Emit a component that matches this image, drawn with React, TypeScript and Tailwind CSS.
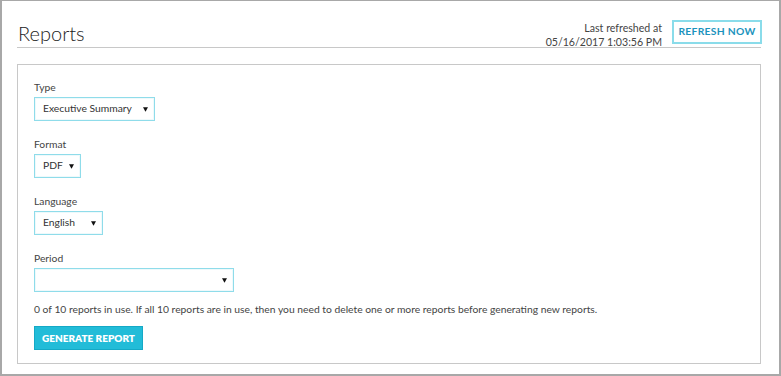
import React from "react";

function Arrow() {
  return (
    <svg width="5" height="5" viewBox="0 0 5 5" className="shrink-0">
      <path d="M0 0.3 H5 L2.5 4.8 Z" fill="#111" />
    </svg>
  );
}

function Select({ value, width }: { value: string; width: string }) {
  return (
    <div
      className={`${width} h-[24px] border border-[#8fdcea] bg-white flex items-center justify-between pl-[8px] pr-[6px] shadow-[inset_0_0_0_1px_#eef9fb] text-[10.3px] text-[#333]`}
    >
      <span>{value}</span>
      <Arrow />
    </div>
  );
}

function Field({ label, value, width }: { label: string; value: string; width: string }) {
  return (
    <div className="flex flex-col">
      <div className="text-[10.3px] leading-[14px] text-[#444] mb-[3px]">{label}</div>
      <Select value={value} width={width} />
    </div>
  );
}

export default function App() {
  return (
    <div
      className="w-[781px] h-[376px] border-2 border-t border-[#a8a8a8] bg-white pl-[15px] pr-[18px]"
      style={{ fontFamily: "Lato, 'Open Sans', sans-serif" }}
    >
      <div className="h-[47px] flex items-end justify-between border-b border-[#c8c8c8]">
        <div className="text-[20px] font-light text-[#222] leading-[24px] pb-[2px] pl-[1px]">Reports</div>
        <div className="flex items-end gap-[10px] pb-[3px]">
          <div className="text-right text-[10.6px] leading-[14px] text-[#444] mb-[-5px]">
            <div>Last refreshed at</div>
            <div>05/16/2017 1:03:56 PM</div>
          </div>
          <div className="w-[90px] h-[24px] border-2 border-[#8adcea] flex items-center justify-center text-[10.3px] font-bold text-[#1b93bd] tracking-[0.3px] mr-[-1px]">
            REFRESH NOW
          </div>
        </div>
      </div>
      <div className="mt-[16px] border border-[#c8c8c8] h-[300px] pl-[16px] pt-[15px] flex flex-col gap-[16px]">
        <Field label="Type" value="Executive Summary" width="w-[121px]" />
        <Field label="Format" value="PDF" width="w-[47px]" />
        <Field label="Language" value="English" width="w-[69px]" />
        <div className="flex flex-col">
          <div className="text-[10.3px] leading-[14px] text-[#444] mb-[3px]">Period</div>
          <Select value="" width="w-[200px]" />
          <div className="text-[10.3px] leading-[14px] text-[#444] mt-[10px]">
            0 of 10 reports in use. If all 10 reports are in use, then you need to delete one or more reports before generating new reports.
          </div>
          <div className="mt-[10px] w-[109px] h-[24px] bg-[#22bcd8] border border-[#15a9c6] flex items-center justify-center text-[10px] font-extrabold text-white">
            GENERATE REPORT
          </div>
        </div>
      </div>
    </div>
  );
}
